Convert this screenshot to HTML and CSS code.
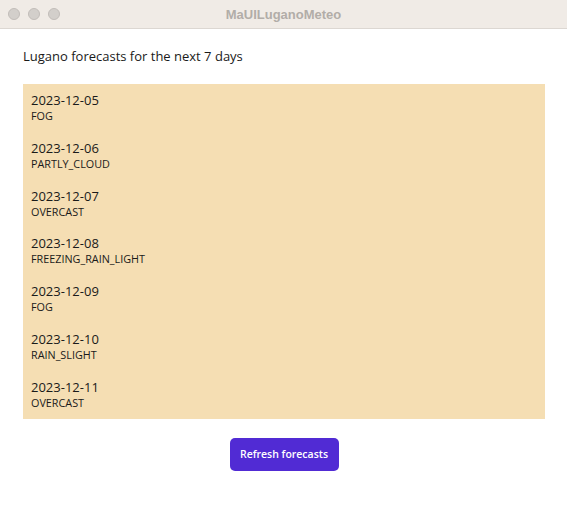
FILE: index.html
```html
<!DOCTYPE html>
<html>
<head>
<meta charset="utf-8">
<link rel="stylesheet" href="styles.css">
</head>
<body>
<div class="window">
  <div class="titlebar">
    <div class="lights">
      <span class="light"></span><span class="light"></span><span class="light"></span>
    </div>
    <div class="title">MaUILuganoMeteo</div>
  </div>
  <div class="content">
    <div class="heading">Lugano forecasts for the next 7 days</div>
    <div class="list">
      <div class="item"><div class="date">2023-12-05</div><div class="cond">FOG</div></div>
      <div class="item"><div class="date">2023-12-06</div><div class="cond">PARTLY_CLOUD</div></div>
      <div class="item"><div class="date">2023-12-07</div><div class="cond">OVERCAST</div></div>
      <div class="item"><div class="date">2023-12-08</div><div class="cond">FREEZING_RAIN_LIGHT</div></div>
      <div class="item"><div class="date">2023-12-09</div><div class="cond">FOG</div></div>
      <div class="item"><div class="date">2023-12-10</div><div class="cond">RAIN_SLIGHT</div></div>
      <div class="item"><div class="date">2023-12-11</div><div class="cond">OVERCAST</div></div>
    </div>
    <div class="actions">
      <button class="refresh">Refresh forecasts</button>
    </div>
  </div>
</div>
</body>
</html>
```
FILE: styles.css
```css
html, body {
  margin: 0;
  padding: 0;
  background: #ffffff;
}
body {
  font-family: "Open Sans", "Noto Sans", sans-serif;
  color: #1a1a1a;
}
.window {
  width: 567px;
  height: 517px;
  display: flex;
  flex-direction: column;
}
.titlebar {
  height: 28px;
  background: #f0ebe6;
  border-bottom: 1px solid #dcd7d2;
  position: relative;
  display: flex;
  align-items: center;
  justify-content: center;
  flex-shrink: 0;
}
.lights {
  position: absolute;
  left: 8px;
  top: 8px;
  display: flex;
  gap: 8px;
}
.light {
  box-sizing: border-box;
  width: 12px;
  height: 12px;
  border-radius: 50%;
  background: #d3cfcb;
  border: 1px solid #c2bdb9;
}
.title {
  font-family: "Liberation Sans", Arial, sans-serif;
  font-weight: bold;
  font-size: 13px;
  color: #b2ada8;
}
.content {
  padding: 17px 22px 0 23px;
  display: flex;
  flex-direction: column;
}
.heading {
  font-size: 13px;
  line-height: 20px;
  height: 20px;
  margin-bottom: 18px;
}
.list {
  background: #f5deb3;
  padding: 7px 8px 9px 8px;
  display: flex;
  flex-direction: column;
  gap: 15.8px;
}
.date {
  font-size: 13px;
  line-height: 18px;
}
.cond {
  font-size: 10.8px;
  line-height: 14px;
}
.actions {
  display: flex;
  justify-content: center;
  padding-top: 19px;
}
.refresh {
  width: 109px;
  height: 33px;
  background: #512bd4;
  color: #ffffff;
  border: none;
  border-radius: 5px;
  font-family: "Open Sans", "Noto Sans", sans-serif;
  font-weight: 600;
  font-size: 10.5px;
  padding: 0;
}
```
